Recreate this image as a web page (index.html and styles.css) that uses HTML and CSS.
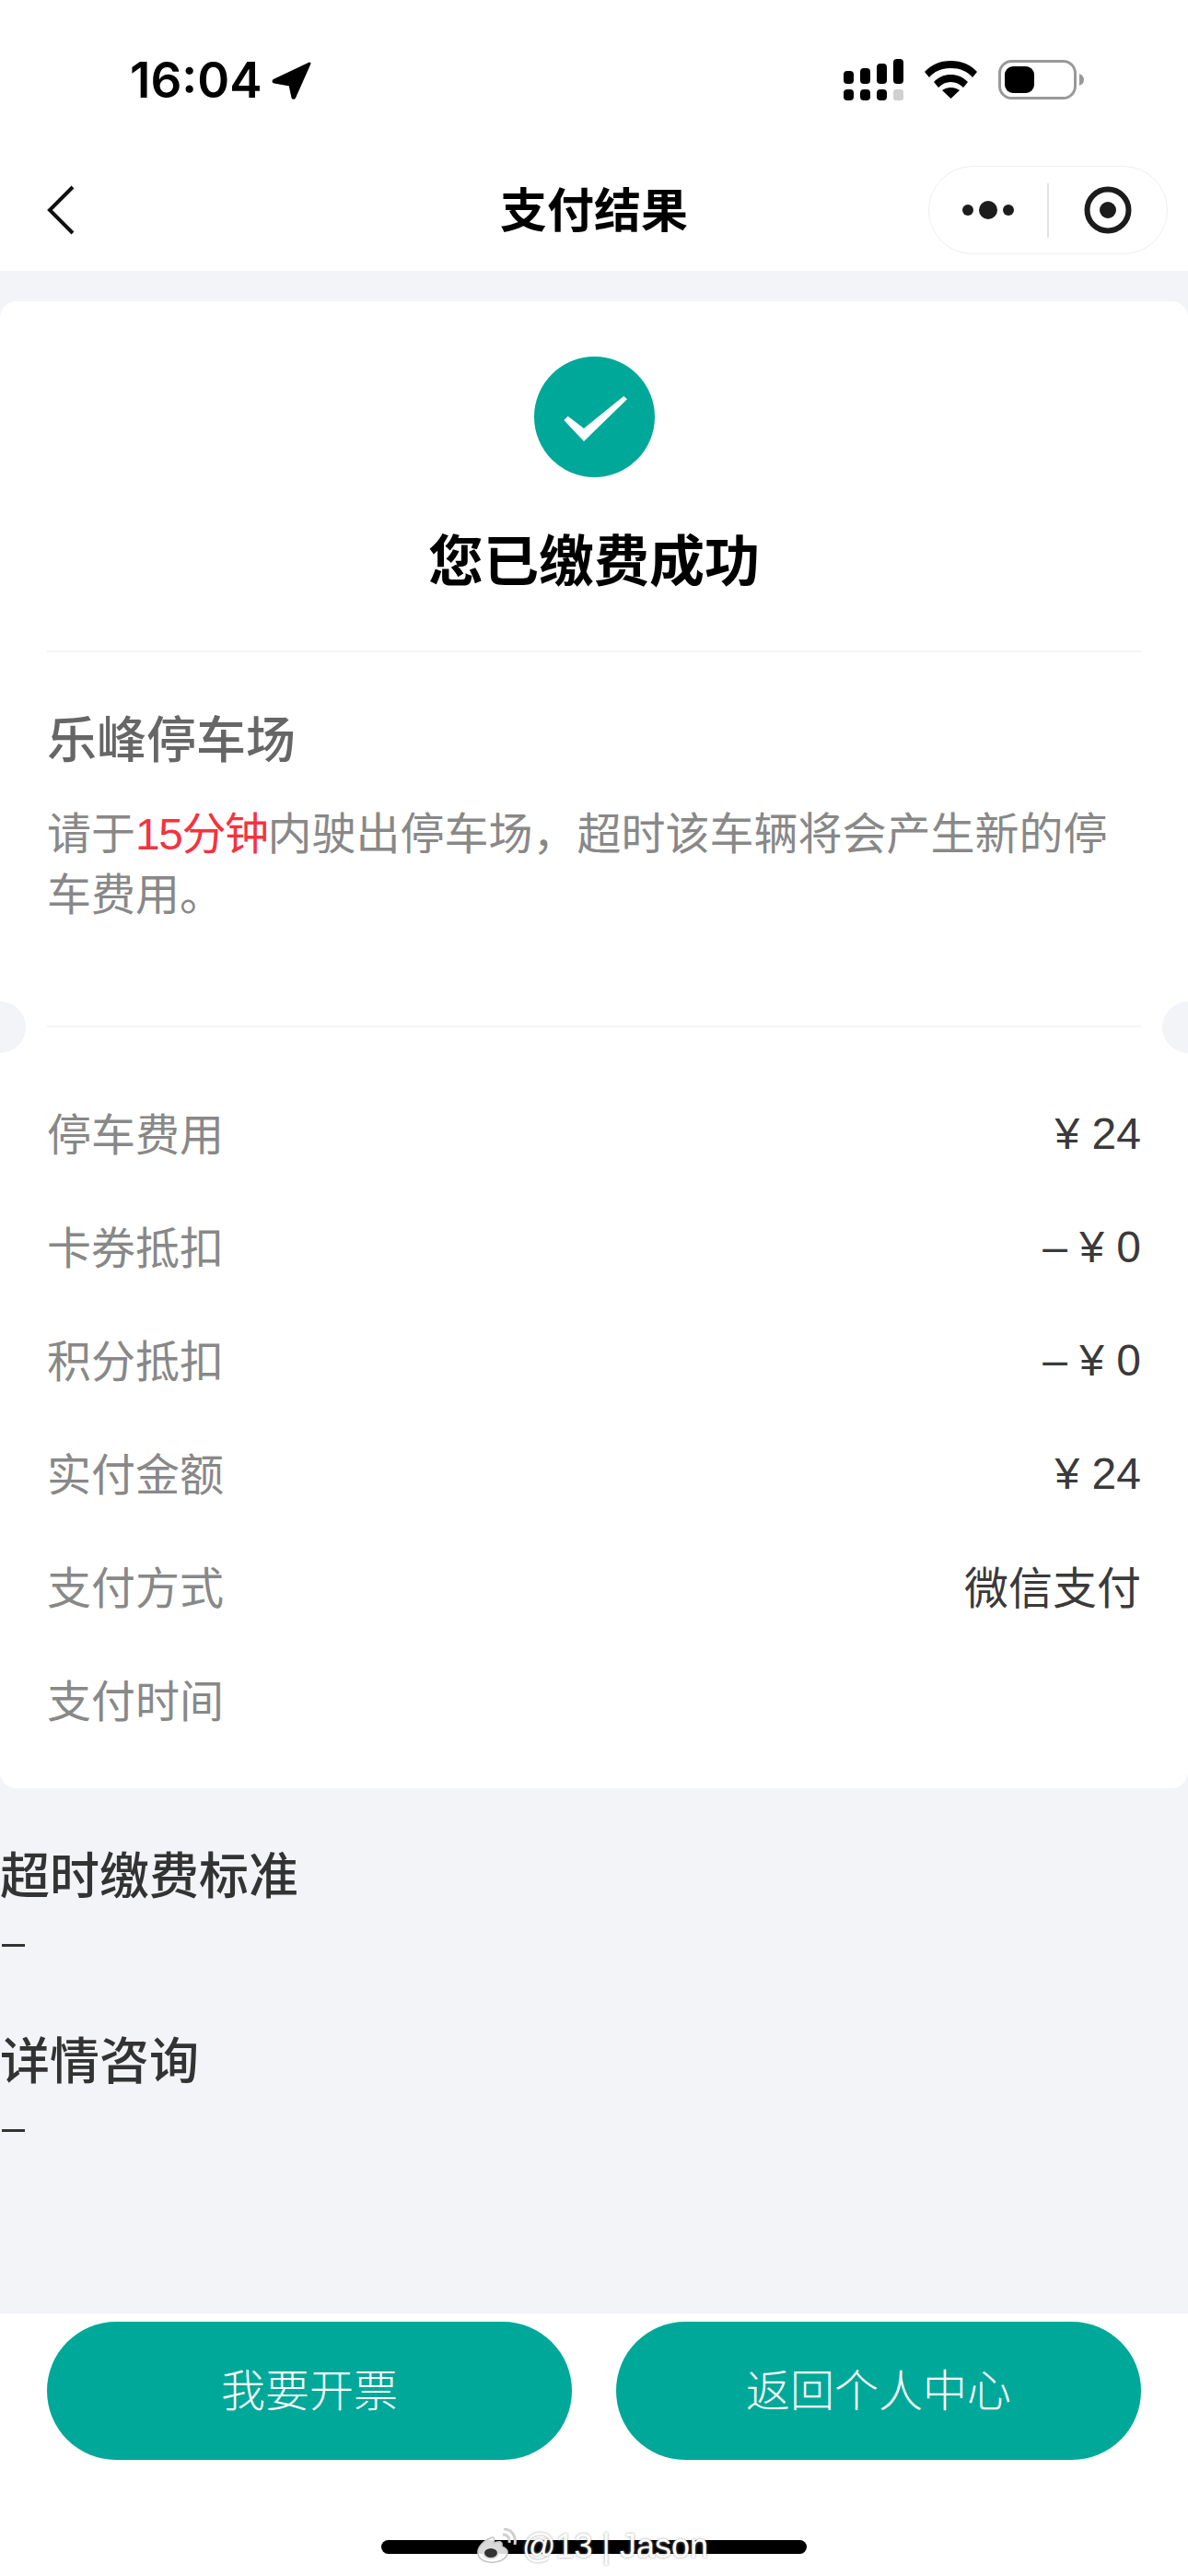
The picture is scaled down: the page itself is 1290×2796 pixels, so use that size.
FILE: index.html
```html
<!DOCTYPE html>
<html>
<head>
    <meta charset="utf-8">
    <link rel="stylesheet" href="styles.css">
</head>
<body>
<div class="page">
    <div class="status-bar">
        <div class="status-time">
            <span>16:04</span>
            <svg class="status-arrow" width="43" height="41" viewBox="0 0 43 41">
                <path d="M41 2 L3 20 Q1 21.500 3 22 L20 25 L23 39 Q24 40 25 38 Z" fill="#000" stroke="#000" stroke-width="3" stroke-linejoin="round"/>
            </svg>
        </div>
        <div class="status-icons">
            <svg width="65" height="45" viewBox="0 0 65 45">
                <rect x="0" y="13" width="11" height="14" rx="4" fill="#000"/>
                <rect x="18" y="10" width="11" height="17" rx="4" fill="#000"/>
                <rect x="36" y="5" width="11" height="22" rx="4" fill="#000"/>
                <rect x="54" y="0" width="11" height="27" rx="4" fill="#000"/>
                <rect x="0" y="33" width="11" height="12" rx="4" fill="#000"/>
                <rect x="18" y="33" width="11" height="12" rx="4" fill="#000"/>
                <rect x="36" y="33" width="11" height="12" rx="4" fill="#000"/>
                <rect x="54" y="33" width="11" height="12" rx="3" fill="#d0d0d0"/>
            </svg>
            <svg class="status-wifi" width="57" height="41" viewBox="0 0 57 41">
                <path d="M28.500 0 C40 0 50 4 57 12 L52 18 C46 11 38 8 28.500 8 C19 8 11 11 5 18 L0 12 C7 4 17 0 28.500 0 Z" fill="#000"/>
                <path d="M28.500 15 C35 15 41 17 47 23 L42 29 C38 25 34 23 28.500 23 C23 23 19 25 15 29 L10 23 C16 17 22 15 28.500 15 Z" fill="#000"/>
                <path d="M28.500 29 C32 29 35 30 38 32 L28.500 41 L19 32 C22 30 25 29 28.500 29 Z" fill="#000"/>
            </svg>
            <svg class="status-battery" width="93" height="43" viewBox="0 0 93 43">
                <rect x="1.500" y="1.500" width="82" height="40" rx="13" fill="none" stroke="#999" stroke-width="3"/>
                <rect x="7" y="7" width="32" height="29" rx="9" fill="#000"/>
                <path d="M88 15 Q93 17 93 21.500 Q93 26 88 28 Z" fill="#999"/>
            </svg>
        </div>
    </div>

    <div class="nav-bar">
        <div class="nav-left">
            <svg width="30" height="54" viewBox="0 0 30 54">
                <path d="M28 2 L3 27 L28 52" fill="none" stroke="#111" stroke-width="4"/>
            </svg>
        </div>
        <div class="nav-title">支付结果</div>
        <div class="nav-right">
            <div class="capsule">
                <div class="capsule-part">
                    <svg width="60" height="24" viewBox="0 0 60 24">
                        <circle cx="8" cy="12" r="6" fill="#1c1c1c"/>
                        <circle cx="30" cy="12" r="10" fill="#1c1c1c"/>
                        <circle cx="52" cy="12" r="6" fill="#1c1c1c"/>
                    </svg>
                </div>
                <div class="capsule-line"></div>
                <div class="capsule-part">
                    <svg width="52" height="52" viewBox="0 0 52 52">
                        <circle cx="26" cy="26" r="22.500" fill="none" stroke="#1c1c1c" stroke-width="6"/>
                        <circle cx="26" cy="26" r="9" fill="#1c1c1c"/>
                    </svg>
                </div>
            </div>
        </div>
    </div>

    <div class="content">
        <div class="card">
            <div class="result">
                <div class="result-icon">
                    <svg width="74" height="54" viewBox="0 0 74 54">
                        <path d="M4.300 30 L8.700 25.700 L26 39 L69.300 4 L73 7.300 L26 53 Z" fill="#fff"/>
                    </svg>
                </div>
                <div class="result-title">您已缴费成功</div>
            </div>
            <div class="notice">
                <div class="notice-name">乐峰停车场</div>
                <div class="notice-text">请于<span class="red">15分钟</span>内驶出停车场，超时该车辆将会产生新的停车费用。</div>
            </div>
            <div class="ticket-line">
                <div class="notch notch-left"></div>
                <div class="notch notch-right"></div>
            </div>
            <div class="rows">
                <div class="row"><div class="row-label">停车费用</div><div class="row-value row-amount">¥ 24</div></div>
                <div class="row"><div class="row-label">卡券抵扣</div><div class="row-value row-amount">– ¥ 0</div></div>
                <div class="row"><div class="row-label">积分抵扣</div><div class="row-value row-amount">– ¥ 0</div></div>
                <div class="row"><div class="row-label">实付金额</div><div class="row-value row-amount">¥ 24</div></div>
                <div class="row"><div class="row-label">支付方式</div><div class="row-value">微信支付</div></div>
                <div class="row"><div class="row-label">支付时间</div><div class="row-value"></div></div>
            </div>
        </div>
        <div class="info">
            <div class="info-title">超时缴费标准</div>
            <div class="info-dash"></div>
        </div>
        <div class="info">
            <div class="info-title">详情咨询</div>
            <div class="info-dash"></div>
        </div>
    </div>

    <div class="footer">
        <div class="buttons">
            <div class="button">我要开票</div>
            <div class="button">返回个人中心</div>
        </div>
        <div class="home-bar"></div>
        <div class="watermark">
            <svg width="46" height="40" viewBox="0 0 46 40">
                <path d="M18 10 C8 13 1 21 2 28 C3 35 12 38 20 37 C29 36 35 31 34 25 C33 22 30 21 28 20 C29 16 27 14 23 15 L19 16 C20 12 20 10 18 10 Z" fill="#fff" fill-opacity="0.85" stroke="#c4c4c4" stroke-width="1.500"/>
                <ellipse cx="16" cy="27" rx="8" ry="6" fill="#333" stroke="#ddd" stroke-width="2"/>
                <path d="M29 7 C34 7 37 11 36 16 M30 1 C38 1 44 8 42 18" fill="none" stroke="#d0d0d0" stroke-width="3"/>
            </svg>
            <span>@13 | Jason</span>
        </div>
    </div>
</div>
</body>
</html>
```
FILE: styles.css
```css
* {
    box-sizing: border-box;
}

body {
    margin: 0;
    background-color: #fff;
    font-family: "Liberation Sans", "Noto Sans CJK SC", sans-serif;
}

.page {
    position: relative;
    width: 1290px;
    height: 2796px;
    display: flex;
    flex-direction: column;
    overflow: hidden;
}

.status-bar {
    height: 165px;
    padding: 64px 113px 0 141px;
    display: flex;
    justify-content: space-between;
    align-items: flex-start;
}

.status-time {
    display: flex;
    align-items: center;
    gap: 11px;
    font-family: Inter, sans-serif;
    font-size: 53px;
    font-weight: 600;
    line-height: 46px;
    color: #000;
}

.status-icons {
    display: flex;
    align-items: flex-start;
    gap: 23px;
}

.status-wifi {
    margin-top: 2px;
}

.status-battery {
    margin-top: 1px;
}

.nav-bar {
    height: 129px;
    padding: 15px 22px 18px;
    display: grid;
    grid-template-columns: 1fr auto 1fr;
    align-items: center;
}

.nav-left {
    padding-left: 29px;
    display: flex;
    align-items: center;
}

.nav-title {
    padding-top: 3px;
    font-size: 51px;
    font-weight: 700;
    line-height: 66px;
    color: #000;
}

.nav-right {
    display: flex;
    justify-content: flex-end;
}

.capsule {
    width: 260px;
    height: 96px;
    display: flex;
    align-items: center;
    border: 1px solid #eeeeee;
    border-radius: 48px;
}

.capsule-part {
    flex: 1;
    display: flex;
    justify-content: center;
    align-items: center;
}

.capsule-line {
    width: 2px;
    height: 59px;
    background-color: #e2e2e2;
}

.content {
    flex: 1;
    padding-top: 33px;
    background-color: #f3f4f8;
}

.card {
    height: 1614px;
    display: flex;
    flex-direction: column;
    background-color: #fff;
    border-radius: 18px;
}

.result {
    height: 381px;
    margin: 0 51px;
    padding-top: 60px;
    display: flex;
    flex-direction: column;
    align-items: center;
    border-bottom: 2px solid #f3f3f5;
}

.result-icon {
    width: 131px;
    height: 131px;
    display: flex;
    justify-content: center;
    align-items: center;
    background-color: #00a899;
    border-radius: 50%;
}

.result-title {
    margin-top: 55px;
    font-size: 60px;
    font-weight: 700;
    line-height: 76px;
    color: #000;
}

.notice {
    height: 405px;
    padding: 58px 51px 0;
}

.notice-name {
    font-size: 54px;
    font-weight: 500;
    line-height: 76px;
    color: #666;
}

.notice-text {
    margin-top: 31px;
    font-size: 48px;
    line-height: 66px;
    color: #888;
}

.red {
    color: #f5333f;
    letter-spacing: -1.500px;
}

.ticket-line {
    position: relative;
    height: 2px;
    margin: 0 51px;
    background-color: #f5f5f7;
}

.notch {
    position: absolute;
    top: -26px;
    width: 28px;
    height: 56px;
    background-color: #f3f4f8;
}

.notch-left {
    left: -51px;
    border-radius: 0 28px 28px 0;
}

.notch-right {
    right: -51px;
    border-radius: 28px 0 0 28px;
}

.rows {
    padding: 51px 51px 0;
}

.row {
    height: 123px;
    display: flex;
    justify-content: space-between;
    align-items: center;
    font-size: 48px;
}

.row-label {
    color: #888;
}

.row-value {
    color: #3a3a3a;
}

.row-amount {
    padding-top: 6px;
}

.info {
    height: 201px;
    padding-top: 58px;
    color: #333;
}

.info-title {
    font-size: 54px;
    font-weight: 500;
    line-height: 76px;
}

.info-dash {
    width: 25px;
    height: 3px;
    margin: 35px 0 0 2px;
    background-color: #333;
}

.footer {
    height: 285px;
    padding: 9px 51px 0;
    background-color: #fff;
}

.buttons {
    display: flex;
    gap: 48px;
}

.button {
    flex: 1;
    height: 150px;
    padding-bottom: 8px;
    display: flex;
    justify-content: center;
    align-items: center;
    background-color: #00a899;
    border-radius: 75px;
    font-size: 48px;
    font-weight: 300;
    color: #fff;
}

.home-bar {
    width: 462px;
    height: 15px;
    margin: 87px auto 0;
    background-color: #000;
    border-radius: 8px;
}

.watermark {
    position: absolute;
    left: 517px;
    top: 2743px;
    display: flex;
    align-items: center;
    gap: 4px;
    font-family: "Liberation Sans", sans-serif;
    font-size: 36px;
    line-height: 42px;
    color: #fff;
    text-shadow: 0 0 3px #999;
}
```
